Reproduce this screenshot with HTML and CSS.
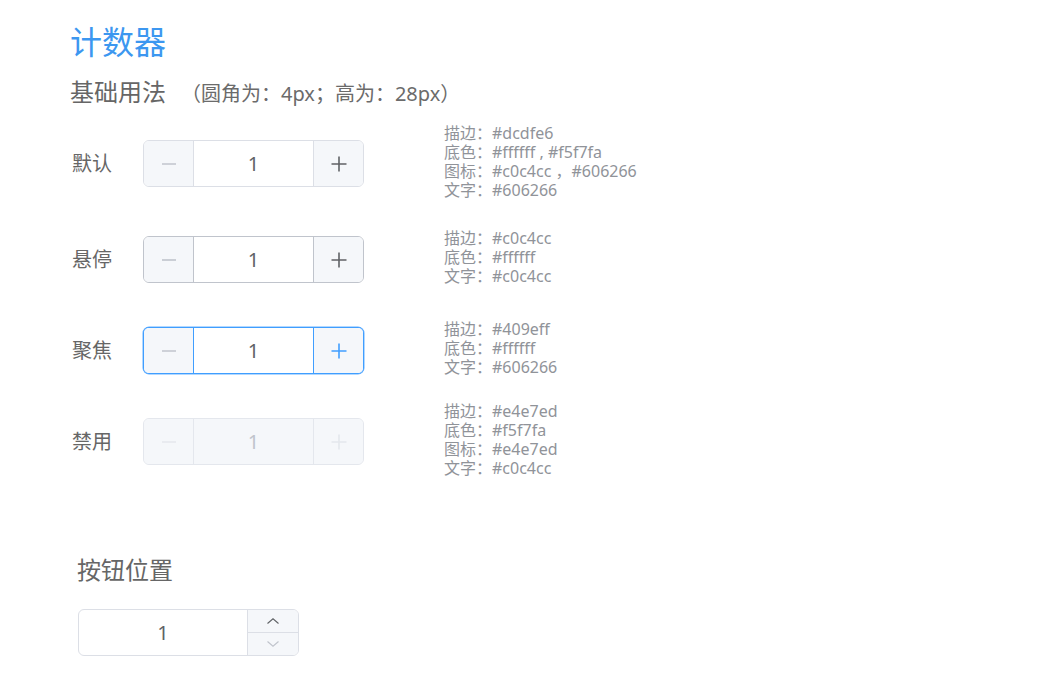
FILE: index.html
```html
<!DOCTYPE html>
<html lang="zh-CN">
<head>
<meta charset="utf-8">
<title>计数器</title>
<link rel="stylesheet" href="styles.css">
</head>
<body>
<div class="page">
  <h1 class="title">计数器</h1>
  <h2 class="subtitle">基础用法<span class="note">（圆角为：4px；高为：28px）</span></h2>

  <div class="rows">
    <div class="row tall">
      <div class="label">默认</div>
      <div class="counter">
        <div class="btn minus"><svg viewBox="0 0 16 16"><path d="M1 8h14"/></svg></div>
        <div class="value">1</div>
        <div class="btn plus"><svg viewBox="0 0 16 16"><path d="M8 0.5v15M0.5 8h15"/></svg></div>
      </div>
      <div class="desc">
        <div>描边：#dcdfe6</div>
        <div>底色：#ffffff , #f5f7fa</div>
        <div>图标：#c0c4cc ，#606266</div>
        <div>文字：#606266</div>
      </div>
    </div>

    <div class="row">
      <div class="label">悬停</div>
      <div class="counter hover">
        <div class="btn minus"><svg viewBox="0 0 16 16"><path d="M1 8h14"/></svg></div>
        <div class="value">1</div>
        <div class="btn plus"><svg viewBox="0 0 16 16"><path d="M8 0.5v15M0.5 8h15"/></svg></div>
      </div>
      <div class="desc">
        <div>描边：#c0c4cc</div>
        <div>底色：#ffffff</div>
        <div>文字：#c0c4cc</div>
      </div>
    </div>

    <div class="row">
      <div class="label">聚焦</div>
      <div class="counter focus">
        <div class="btn minus"><svg viewBox="0 0 16 16"><path d="M1 8h14"/></svg></div>
        <div class="value">1</div>
        <div class="btn plus"><svg viewBox="0 0 16 16"><path d="M8 0.5v15M0.5 8h15"/></svg></div>
      </div>
      <div class="desc">
        <div>描边：#409eff</div>
        <div>底色：#ffffff</div>
        <div>文字：#606266</div>
      </div>
    </div>

    <div class="row">
      <div class="label">禁用</div>
      <div class="counter disabled">
        <div class="btn minus"><svg viewBox="0 0 16 16"><path d="M1 8h14"/></svg></div>
        <div class="value">1</div>
        <div class="btn plus"><svg viewBox="0 0 16 16"><path d="M8 0.5v15M0.5 8h15"/></svg></div>
      </div>
      <div class="desc">
        <div>描边：#e4e7ed</div>
        <div>底色：#f5f7fa</div>
        <div>图标：#e4e7ed</div>
        <div>文字：#c0c4cc</div>
      </div>
    </div>
  </div>

  <div class="section2">
    <h2 class="subtitle">按钮位置</h2>
    <div class="counter right">
      <div class="value">1</div>
      <div class="arrows">
        <div class="arrow up"><svg viewBox="0 0 12 6"><path d="M0.5 5.5L6 0.8L11.5 5.5"/></svg></div>
        <div class="arrow down"><svg viewBox="0 0 12 6"><path d="M0.5 0.5L6 5.2L11.5 0.5"/></svg></div>
      </div>
    </div>
  </div>
</div>
</body>
</html>
```

FILE: styles.css
```css
html, body {
  margin: 0;
  padding: 0;
  background: #ffffff;
}

body {
  font-family: "Noto Sans", "Noto Sans CJK SC", sans-serif;
  color: #606266;
}

.page {
  padding: 0 0 0 70px;
}

.title {
  margin: 22px 0 0;
  font-size: 32px;
  line-height: 40px;
  font-weight: 400;
  color: #3c97f0;
}

.subtitle {
  margin: 14px 0 0;
  font-size: 24px;
  line-height: 32px;
  font-weight: 400;
  color: #666666;
}

.note {
  margin-left: 15px;
  font-size: 20px;
  color: #6b6b6b;
}

.rows {
  margin-top: 3px;
  display: flex;
  flex-direction: column;
}

.row {
  height: 91px;
  display: flex;
  align-items: center;
}

.row.tall {
  height: 101px;
}

.label {
  width: 71px;
  padding-left: 2px;
  font-size: 20px;
  line-height: 24px;
  color: #666666;
}

.counter {
  box-sizing: border-box;
  width: 221px;
  height: 47px;
  border: 1px solid #dcdfe6;
  border-radius: 6px;
  display: flex;
  overflow: hidden;
  background: #ffffff;
}

.btn {
  box-sizing: border-box;
  width: 50px;
  flex: none;
  background: #f5f7fa;
  display: flex;
  align-items: center;
  justify-content: center;
}

.btn svg {
  width: 16px;
  height: 16px;
  fill: none;
  stroke-width: 1.6;
}

.minus {
  border-right: 1px solid #dcdfe6;
  stroke: #c0c4cc;
}

.plus {
  border-left: 1px solid #dcdfe6;
  stroke: #606266;
}

.value {
  flex: 1;
  display: flex;
  align-items: center;
  justify-content: center;
  font-size: 20px;
  color: #606266;
}

.counter.hover,
.counter.hover .minus,
.counter.hover .plus {
  border-color: #c0c4cc;
}

.counter.focus {
  border-color: #409eff;
  box-shadow: 0 0 0 0.5px #66b1ff;
}

.counter.focus .minus,
.counter.focus .plus {
  border-color: #409eff;
}

.counter.focus .plus {
  stroke: #409eff;
}

.counter.disabled,
.counter.disabled .minus,
.counter.disabled .plus {
  border-color: #e4e7ed;
}

.counter.disabled {
  background: #f5f7fa;
}

.counter.disabled .btn {
  stroke: #e4e7ed;
}

.counter.disabled .value {
  color: #c0c4cc;
}

.desc {
  margin-left: 80px;
  margin-bottom: 4px;
  font-size: 16px;
  line-height: 19px;
  color: #909399;
}

.section2 {
  margin-top: 67px;
  padding-left: 7px;
}

.section2 .subtitle {
  margin: 0;
}

.counter.right {
  margin-top: 23px;
  margin-left: 1px;
}

.arrows {
  width: 50px;
  flex: none;
  border-left: 1px solid #dcdfe6;
  display: flex;
  flex-direction: column;
  background: #f5f7fa;
}

.arrow {
  flex: 1;
  display: flex;
  align-items: center;
  justify-content: center;
}

.arrow.up {
  border-bottom: 1px solid #dcdfe6;
  stroke: #606266;
}

.arrow.down {
  stroke: #c0c4cc;
}

.arrow svg {
  width: 12px;
  height: 6px;
  fill: none;
  stroke-width: 1.1;
}
```
